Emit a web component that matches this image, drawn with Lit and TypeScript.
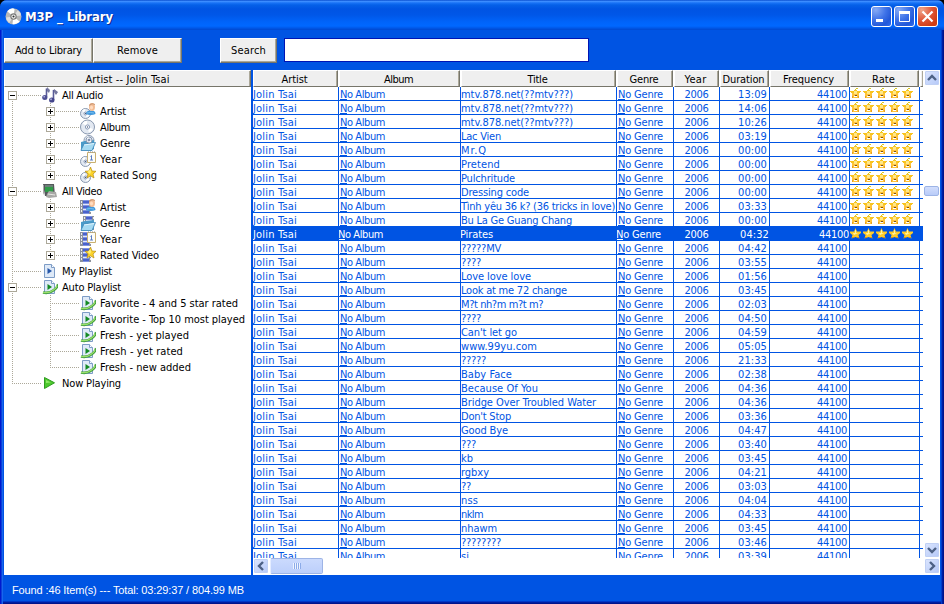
import { LitElement, html, svg, css, nothing } from "lit";
import { customElement, property } from "lit/decorators.js";
import { classMap } from "lit/directives/class-map.js";

/** Single line of text tracked so that it fills exactly `w` pixels. */
@customElement("fit-text")
class FitText extends LitElement {
  @property() text = "";
  @property({ type: Number }) w = 0;
  static styles = css`
    :host { display: inline-block; white-space: pre; }
    .t { display: inline-block; white-space: pre; }
  `;
  updated() {
    const s = this.renderRoot.querySelector(".t") as HTMLElement;
    s.style.letterSpacing = "0px";
    const nat = s.getBoundingClientRect().width;
    if (this.w) s.style.letterSpacing = (this.w - nat) / this.text.length + "px";
  }
  render() { return html`<span class="t">${this.text}</span>`; }
}

const fit = (text: string, w: number) => html`<fit-text .text=${text} .w=${w}></fit-text>`;

const disc = (x: number, y: number, r: number) => svg`
  <circle cx=${x} cy=${y} r=${r} fill="#e3e9f2" stroke="#8998af" stroke-width="1"/>
  <path d="M${x} ${y}L${x - r * 0.7} ${y - r * 0.55}A${r * 0.9} ${r * 0.9} 0 0 1 ${x - r * 0.1} ${y - r * 0.9}Z" fill="#fff"/>
  <path d="M${x} ${y}L${x + r * 0.8} ${y + r * 0.3}A${r * 0.85} ${r * 0.85} 0 0 1 ${x + r * 0.2} ${y + r * 0.8}Z" fill="#fff"/>
  <circle cx=${x} cy=${y} r=${r * 0.3} fill="#fff" stroke="#8a9bb8" stroke-width="1"/>
  <circle cx=${x} cy=${y} r=".7" fill="#4b5d80"/>`;
const film = svg`
  <path d="M0 1H11V15H0Z" fill="#8d929c"/><path d="M3 1H9V15H3Z" fill="#8094e0"/>
  <path d="M3 2H9V4H3ZM3 7H9V9H3ZM3 12H9V14H3Z" fill="#4a62cc"/><path d="M3 5H9V6H3ZM3 10H9V11H3Z" fill="#e2e8fb"/>
  <path d="M1 2H2V4H1ZM1 5H2V7H1ZM1 8H2V10H1ZM1 11H2V13H1ZM10 2H11V4H10ZM10 5H11V7H10ZM10 8H11V10H10ZM10 11H11V13H10Z" fill="#eceef2"/>`;
const person = svg`<path d="M6 11C6 8.500 8 7.500 11 7.500S15.500 8.500 15.500 11Q11 13 6 11Z" fill="#3f97dc"/><path d="M7 10Q10 9 14 10" stroke="#79c0f0" fill="none"/>
  <ellipse cx="12" cy="4" rx="3" ry="4" fill="#f2bc94"/><path d="M9 2Q11-1 15 1V2Q12 0 9 3Z" fill="#c89470"/><ellipse cx="11.500" cy="4.500" rx="1.500" ry="2" fill="#ffdcc0"/>`;
const folder = svg`<path d="M1 7L5 6L14 5V14L11 15.500H1Z" fill="#4a9bc9"/><path d="M1 15L4 9L15.500 7.500L12 15.500H1Z" fill="#a5daf2" stroke="#3c86b8" stroke-width=".8"/><path d="M4 10L14 8.500" stroke="#e2f6ff"/>`;
const calendar = svg`<path d="M7.500 1.500H15.500V11.500H7.500Z" fill="#fdfdf8" stroke="#c9b070"/><path d="M8 1H15" stroke="#8a92a0" stroke-dasharray="1 1"/><path d="M10.500 5.500L11.500 4.500V9M10 9H13" stroke="#5a7dc4" fill="none"/>`;
const bigStar = svg`<path d="M10.500 0L12 4L16 4.300L13 7L14 11L10.500 8.800L7 11L8 7L5 4.300L9 4Z" fill="#fbd32c" stroke="#b98d12" stroke-width=".7"/><path d="M10.500 2L11 5L10 7L7.500 5Z" fill="#fff07a"/>`;
const page = (c: string) => svg`<path d="M2.500 1.500H9.500L12.500 4.500V14.500H2.500Z" fill="#dfeaf8" stroke="#7d9cc6"/><path d="M9.500 1.500V4.500H12.500" fill="#fff" stroke="#7d9cc6"/><path d="M5.500 5L10 8L5.500 11Z" fill=${c}/>`;

const pictures: Record<string, unknown> = {
  notes: svg`<path d="M4.500 1.500V10M4.500 1.500L7 4.500M11.500 3V13M11.500 3L15 6" stroke="#5a5c98" stroke-width="1.600" fill="none"/><path d="M5 0L8 3L7 6L5 4ZM12 2L16 5L14 8L12 5Z" fill="#75779f"/>
    <ellipse cx="2.800" cy="10.500" rx="2.600" ry="2.500" fill="#4d4e93"/><ellipse cx="9.800" cy="13" rx="2.700" ry="2.600" fill="#44458b"/><circle cx="2.200" cy="9.700" r=".9" fill="#a7a9d6"/><circle cx="9" cy="12.200" r="1" fill="#a7a9d6"/>`,
  discPerson: svg`${disc(5.5, 10.5, 5)}${person}`,
  disc: disc(7.5, 8, 7),
  discFolder: svg`${disc(9, 5.5, 5)}${folder}${disc(9, 5, 3)}`,
  discCalendar: svg`${disc(5.5, 10.5, 5)}${calendar}`,
  discStar: svg`${disc(5.5, 10.5, 5)}${bigStar}`,
  video: svg`<path d="M1 1H12L13 13H3Z" fill="#55585b"/><path d="M3 2H11V9H3Z" fill="#2f9c48"/><path d="M3 2H11V4H3Z" fill="#6c8178"/><path d="M1 2H2V12L1 10Z" fill="#aaa"/><path d="M5 11L7 8L14 9L15 14L7 15L4 14Z" fill="#a8a8a6"/><path d="M6 11L13 12" stroke="#e6e6e2"/>`,
  filmPerson: svg`${film}${person}`,
  filmFolder: svg`<g transform="translate(3 0)">${film}</g>${folder}`,
  filmCalendar: svg`${film}${calendar}`,
  filmStar: svg`${film}${bigStar}`,
  page: page("#2556a8"),
  auto: svg`${page("#148a24")}<path d="M1 13.500Q7 15 12 11T14.500 6" fill="none" stroke="#3f9c3c" stroke-width="2.600"/><path d="M1 13.500Q7 14.500 11.500 11T14.300 6.500" fill="none" stroke="#9be06c" stroke-width="1.200"/>`,
  play: svg`<path d="M2.500 2.500L12.500 7.800L2.500 13.500Z" fill="#4cc82c" stroke="#2f9c20"/><path d="M4 5L9 7.500L4 8Z" fill="#8fe866"/>`,
};
const icon = (name: string) => html`<svg class="icon" width="16" height="16" viewBox="0 0 16 16">${pictures[name]}</svg>`;

type Node = [level: number, box: string, icon: string, label: string, width: number];
const nodes: Node[] = [
  [0, "-", "notes", "All Audio", 41],
  [1, "+", "discPerson", "Artist", 26], [1, "+", "disc", "Album", 30], [1, "+", "discFolder", "Genre", 30],
  [1, "+", "discCalendar", "Year", 22], [1, "+", "discStar", "Rated Song", 57],
  [0, "-", "video", "All Video", 40],
  [1, "+", "filmPerson", "Artist", 26], [1, "+", "filmFolder", "Genre", 30],
  [1, "+", "filmCalendar", "Year", 22], [1, "+", "filmStar", "Rated Video", 59],
  [0, "", "page", "My Playlist", 50],
  [0, "-", "auto", "Auto Playlist", 59],
  [1, "", "auto", "Favorite - 4 and 5 star rated", 138], [1, "", "auto", "Favorite - Top 10 most played", 145],
  [1, "", "auto", "Fresh - yet played", 89], [1, "", "auto", "Fresh - yet rated", 83], [1, "", "auto", "Fresh - new added", 91],
  [0, "", "play", "Now Playing", 59],
];

const songs: [string, number, string][] = [
  ["mtv.878.net(??mtv???)", 112, "13:09"], ["mtv.878.net(??mtv???)", 112, "14:06"], ["mtv.878.net(??mtv???)", 112, "10:26"],
  ["Lac Vien", 40, "03:19"], ["Mr.Q", 26, "00:00"], ["Pretend", 39, "00:00"], ["Pulchritude", 54, "00:00"], ["Dressing code", 68, "00:00"],
  ["Tình yêu 36 k? (36 tricks in love)", 154, "03:33"], ["Bu La Ge Guang Chang", 111, "00:00"], ["Pirates", 33, "04:32"],
  ["?????MV", 40, "04:42"], ["????", 20, "03:55"], ["Love love love", 70, "01:56"], ["Look at me 72 change", 106, "03:45"],
  ["M?t nh?m m?t m?", 82, "02:03"], ["????", 20, "04:50"], ["Can't let go", 56, "04:59"], ["www.99yu.com", 76, "05:05"],
  ["?????", 25, "21:33"], ["Baby Face", 51, "02:38"], ["Because Of You", 77, "04:36"], ["Bridge Over Troubled Water", 135, "04:36"],
  ["Don't Stop", 50, "03:36"], ["Good Bye", 47, "04:47"], ["???", 15, "03:40"], ["kb", 12, "03:45"], ["rgbxy", 28, "04:21"],
  ["??", 10, "03:03"], ["nss", 17, "04:04"], ["nklm", 22, "04:33"], ["nhawm", 36, "03:45"], ["????????", 40, "03:46"], ["si", 8, "03:39"],
];

const heads: [string, number][] = [
  ["Artist", 26], ["Album", 29], ["Title", 20], ["Genre", 29], ["Year", 22], ["Duration", 42], ["Frequency", 51], ["Rate", 23], ["", 0],
];

const fullStar = svg`<path d="M5.500 0L7 3.500H11V5L8.500 7L9.500 10.500L5.500 9L1.500 10.500L2.500 7L0 5V3.500H4Z" fill="#ffcb28"/><path d="M5 2L6 2V5L8 5L4 7L3 5H5Z" fill="#fff3a0"/><path d="M2 9H4V10H2ZM7 9H9V10H7Z" fill="#d98d10"/>`;
const cutStar = svg`<path d="M6 0H8V1H6ZM5 1H6V2H5Z" fill="#d8c820"/><path d="M0 3H4V2H7V3H11V4H10V5H1V4H0Z" fill="#f8c420"/><path d="M2 5H9V10H2Z" fill="#ffc43a"/><path d="M4 3H7V6H4Z" fill="#ffe88a"/><path d="M2 8H3V10H2ZM8 8H9V10H8Z" fill="#e8a020"/><path d="M5 7H7V8H5Z" fill="#7a5018"/><path d="M4 8H7V9H4Z" fill="#fff"/>`;

const chevron = (deg: number) => html`<svg width="16" height="16" viewBox="0 0 16 16"><g transform=${`rotate(${deg} 8 8)`}><path d="M4 10L8 6L12 10" fill="none" stroke="#4d6185" stroke-width="2.400"/></g></svg>`;

@customElement("app-root")
class AppRoot extends LitElement {
  static styles = css`
    :host { display: block; width: 944px; height: 604px; overflow: hidden; background: #000; }
    * { box-sizing: border-box; }
    .window { position: relative; width: 944px; height: 604px; background: #0054e3; border-radius: 7px 7px 0 0; overflow: hidden;
      display: flex; flex-direction: column; font: 11px/13px "DejaVu Sans Condensed", "DejaVu Sans", sans-serif; font-stretch: condensed; color: #000; }
    .title { height: 30px; flex: none; display: flex; align-items: center; padding: 3px 6px 0 5px;
      background: linear-gradient(#0a4fd0 0, #3b8cff 1.5px, #1872f5 3px, #0560e8 5px, #0054e3 9px, #0057e8 15px, #0064fa 22px, #0068ff 26px, #0058e8 28px, #0048d0 30px); }
    .name { margin-left: 3px; flex: 1; font: bold 13px/16px "DejaVu Sans Condensed", "DejaVu Sans", sans-serif; font-stretch: condensed; color: #fff; text-shadow: 1px 1px 0 #0a2a90; }
    .wb { width: 21px; height: 21px; margin-left: 2px; border: 1px solid #fff; border-radius: 3px;
      background: radial-gradient(circle at 20% 15%, #86aaf5, #3f73e8 45%, #2257d8 75%, #2f6cf0); }
    .wb.close { background: radial-gradient(circle at 20% 15%, #f0a58a, #e0583a 45%, #cf3c14 80%); }
    .wb svg { display: block; }
    .tools { height: 40px; flex: none; display: flex; padding: 8px 0 0 4px; align-items: flex-start; }
    .btn { height: 25px; padding-top: 5px; text-align: center; background: #efefef; border: 1px solid; border-color: #fff #76756a #76756a #fff; box-shadow: inset -1px -1px #aca899; }
    .add, .remove { width: 89px; } .search { width: 57px; margin-left: 38px; }
    .input { width: 305px; height: 24px; margin-left: 7px; background: #fff; border: 1px solid #0014b4; }
    .main { height: 505px; flex: none; display: flex; padding: 0 4px; }
    .side { width: 247px; background: #fff; flex: none; }
    .head { height: 17px; padding: 3px 2px 0 0; text-align: center; background: #efefef; border: 1px solid; border-color: #fff #76756a #76756a #fff; box-shadow: inset -1px 0 #aca899; line-height: 12px; }
    .side .head { padding-right: 0; }
    .tree { position: relative; }
    .node { display: flex; height: 16px; padding-left: 8px; line-height: 16px; position: relative; }
    .node fit-text { padding-top: 1px; }
    .node.deep { padding-left: 46px; }
    .joint { width: 34px; flex: none; display: flex; align-items: center; margin-left: -4px; }
    .dots { flex: 1; height: 1px; background: repeating-linear-gradient(90deg, #aca899 0 1px, transparent 1px 2px); margin: 0 1px; }
    .leaf .dots { margin-left: 4px; }
    .box { width: 9px; height: 9px; border: 1px solid #aca899; background: #fff linear-gradient(#000, #000) 1px 3px / 5px 1px no-repeat; }
    .box.plus { background: linear-gradient(#000, #000) 1px 3px / 5px 1px no-repeat, linear-gradient(#000, #000) 3px 1px / 1px 5px no-repeat, #fff; }
    .icon { flex: none; display: block; margin-right: 4px; }
    .rail { position: absolute; width: 1px; background: repeating-linear-gradient(#aca899 0 1px, #fff 1px 2px); }
    .r0 { left: 8px; top: 8px; height: 289px; } .r1 { left: 46px; top: 16px; height: 73px; }
    .r2 { left: 46px; top: 112px; height: 57px; } .r3 { left: 46px; top: 208px; height: 73px; }
    .right { width: 687px; margin-left: 2px; background: #fff; display: grid; grid-template: 488px 17px / 670px 17px; }
    .grid { overflow: hidden; background: #fff; }
    .row, .heads { display: grid; grid-template-columns: 86px 122px 156px 57px 46px 50px 80px 70px 3px; }
    .heads .head { border-right-color: #76756a; margin-right: 1px; }
    .heads .head:last-child { margin-right: 0; }
    .row { height: 14px; color: #0054e3; }
    .cell { height: 14px; padding-top: 1px; overflow: hidden; white-space: nowrap; border-right: 1px solid #0054e3; border-bottom: 1px solid #0054e3; line-height: 13px; }
    .cell:last-child { border-right: 0; }
    .none { padding-left: 1px; position: relative; }
    .none::after { content: ""; position: absolute; left: 1px; top: 12px; width: 7px; height: 1px; background: currentColor; }
    .year { text-align: center; } .time { text-align: right; padding-right: 2px; } .freq { text-align: right; padding-right: 2px; }
    .stars { display: flex; gap: 2px; padding-top: 1px; padding-left: 0; }
    .stars svg { flex: none; display: block; }
    .sel { background: #0054e3; color: #fff; box-shadow: 0 -1px #0054e3; }
    .sel .none { padding-left: 0; } .sel .none fit-text, .sel .song fit-text { margin-left: -1px; }
    .sel .none::after { left: 0; width: 6px; } .sel .time, .sel .freq { padding-right: 0; }
    .vbar { display: flex; flex-direction: column; padding: 0 0 0 1px; }
    .sb { width: 16px; height: 16px; border-radius: 2px; background: linear-gradient(135deg, #dce6fe, #b4c8f8); border: 1px solid #fff; box-shadow: inset 0 0 0 1px #c0d0f4; flex: none; }
    .sb svg { display: block; margin: -1px; }
    .vthumb { width: 15px; height: 10px; margin: 100px 0 346px; border-radius: 2px; background: linear-gradient(#d2defd, #b8cbf8); border: 1px solid #9db4e6; }
    .hbar { display: flex; padding-top: 0; }
    .hthumb { width: 53px; height: 16px; margin-left: 1px; border: 1px solid #9db4e6; border-left-color: #e4ecff; border-radius: 2px; background: linear-gradient(#cbdafd, #bccffb); display: flex; align-items: center; justify-content: center; }
    .grip { width: 8px; height: 6px; background: repeating-linear-gradient(90deg, #eef4ff 0 1px, #8cabe8 1px 2px); }
    .status { padding: 9px 0 0 12px; font: 11px/13px "Liberation Sans", Arial, sans-serif; color: #fff; }
    .edge { position: absolute; inset: 30px 0 0 0; pointer-events: none;
      box-shadow: inset 1px 0 #0019cf, inset 2px 0 #0c3fd8, inset 3px 0 #1765ee, inset -1px 0 #00138c, inset -2px 0 #001ea0, inset -3px 0 #003ccc, inset 0 -1px #00138c, inset 0 -2px #001ea0, inset 0 -3px #0037c8; }
  `;

  node([level, box, pic, label, w]: Node) {
    return html`<div class=${classMap({ node: true, deep: level === 1, leaf: !box })}>
      <div class="joint">${box ? html`<div class=${classMap({ box: true, plus: box === "+" })}></div>` : nothing}<div class="dots"></div></div>
      ${icon(pic)}${fit(label, w)}</div>`;
  }

  song([name, w, time]: [string, number, string], i: number) {
    const sel = i === 10;
    return html`<div class=${classMap({ row: true, sel })}>
      <div class="cell artist">${fit("Jolin Tsai", 44)}</div>
      <div class="cell none">${fit("No Album", 45)}</div>
      <div class="cell song">${fit(name, w)}</div>
      <div class="cell none">${fit("No Genre", 45)}</div>
      <div class="cell year">${fit("2006", 24)}</div>
      <div class="cell time">${fit(time, 29)}</div>
      <div class="cell freq">${fit("44100", 30)}</div>
      <div class="cell stars">${i <= 10 ? [0, 1, 2, 3, 4].map(() => html`<svg width="11" height="11" viewBox="0 0 11 11">${sel ? fullStar : cutStar}</svg>`) : nothing}</div>
      <div class="cell"></div></div>`;
  }

  render() {
    return html`<div class="window">
      <div class="title">
        <svg width="17" height="17" viewBox="0 0 16 16"><circle cx="8" cy="8" r="7.500" fill="#b7b7b7"/><path d="M8 8L2 3Q6-1 9 1ZM8 8L14 13Q10 16 7 15Z" fill="#fff"/><path d="M8 8L1 9Q1 12 4 14ZM8 8L15 7Q15 4 12 2Z" fill="#dedede"/><circle cx="8" cy="8" r="2.500" fill="#f6f6f6" stroke="#777"/><circle cx="8" cy="8" r="1" fill="#333"/></svg>
        <div class="name">${fit("M3P _ Library", 88)}</div>
        <div class="wb"><svg width="19" height="19"><path d="M4 12H11V15H4Z" fill="#fff"/></svg></div>
        <div class="wb"><svg width="19" height="19"><path d="M4.500 5V14.500H14.500V5" fill="none" stroke="#fff"/><path d="M4 4H15V7H4Z" fill="#fff"/></svg></div>
        <div class="wb close"><svg width="19" height="19"><path d="M4.500 4.500L14.500 14.500M14.500 4.500L4.500 14.500" stroke="#fff" stroke-width="2.200"/></svg></div>
      </div>
      <div class="tools">
        <div class="btn add">${fit("Add to Library", 67)}</div><div class="btn remove">${fit("Remove", 41)}</div>
        <div class="btn search">${fit("Search", 35)}</div><div class="input"></div>
      </div>
      <div class="main">
        <div class="side">
          <div class="head">${fit("Artist -- Jolin Tsai", 84)}</div>
          <div class="tree"><div class="rail r0"></div><div class="rail r1"></div><div class="rail r2"></div><div class="rail r3"></div>
            ${nodes.map((n) => this.node(n))}</div>
        </div>
        <div class="right">
          <div class="grid">
            <div class="heads">${heads.map(([t, w]) => html`<div class="head">${t ? fit(t, w) : nothing}</div>`)}</div>
            ${songs.map((s, i) => this.song(s, i))}
          </div>
          <div class="vbar"><div class="sb">${chevron(0)}</div><div class="vthumb"></div><div class="sb">${chevron(180)}</div></div>
          <div class="hbar"><div class="sb">${chevron(270)}</div><div class="hthumb"><div class="grip"></div></div></div>
          <div class="vbar"><div class="sb">${chevron(90)}</div></div>
        </div>
      </div>
      <div class="status">${fit("Found :46 Item(s) --- Total: 03:29:37 / 804.99 MB", 232)}</div>
      <div class="edge"></div>
    </div>`;
  }
}
